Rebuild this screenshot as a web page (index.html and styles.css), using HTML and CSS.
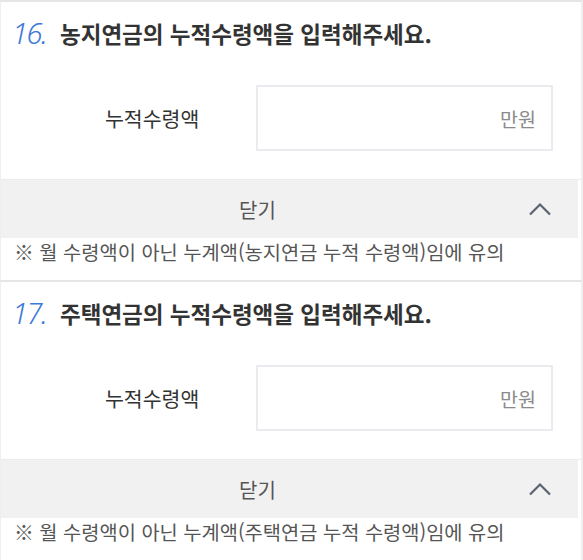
FILE: index.html
```html
<!DOCTYPE html>
<html lang="ko">
<head>
<meta charset="utf-8">
<link rel="stylesheet" href="styles.css">
</head>
<body>
<div class="page">
  <section class="q">
    <div class="q-title">
      <span class="q-num">16.</span>
      <span class="q-text">농지연금의 누적수령액을 입력해주세요.</span>
    </div>
    <div class="q-row">
      <span class="q-label">누적수령액</span>
      <div class="q-input"><span class="q-unit">만원</span></div>
    </div>
    <div class="q-close">
      <span class="q-close-label">닫기</span>
      <span class="q-chevron">
        <svg width="24" height="14" viewBox="0 0 24 14"><path d="M2 12.5 L12 2.5 L22 12.5" fill="none" stroke="#5b6371" stroke-width="2.2"/></svg>
      </span>
    </div>
    <p class="q-note">※ 월 수령액이 아닌 누계액(농지연금 누적 수령액)임에 유의</p>
  </section>
  <section class="q">
    <div class="q-title">
      <span class="q-num">17.</span>
      <span class="q-text">주택연금의 누적수령액을 입력해주세요.</span>
    </div>
    <div class="q-row">
      <span class="q-label">누적수령액</span>
      <div class="q-input"><span class="q-unit">만원</span></div>
    </div>
    <div class="q-close">
      <span class="q-close-label">닫기</span>
      <span class="q-chevron">
        <svg width="24" height="14" viewBox="0 0 24 14"><path d="M2 12.5 L12 2.5 L22 12.5" fill="none" stroke="#5b6371" stroke-width="2.2"/></svg>
      </span>
    </div>
    <p class="q-note">※ 월 수령액이 아닌 누계액(주택연금 누적 수령액)임에 유의</p>
  </section>
</div>
</body>
</html>
```
FILE: styles.css
```css
html, body {
  margin: 0;
  padding: 0;
  background: #fff;
}
body {
  font-family: "Noto Sans CJK KR", "Noto Sans", sans-serif;
  color: #333;
}
.page {
  width: 583px;
}
.q {
  border-top: 2px solid #e6e6e6;
  border-left: 1px solid #efefef;
  border-right: 2px solid #efefef;
}
.q-title {
  height: 61px;
  display: flex;
  align-items: center;
  padding-left: 11px;
  box-sizing: border-box;
}
.q-num {
  font-family: "Noto Sans", "Open Sans", sans-serif;
  font-style: italic;
  font-weight: 300;
  font-size: 29px;
  color: #3c78d8;
  width: 48px;
  letter-spacing: -1.5px;
}
.q-text {
  font-size: 22.5px;
  font-weight: 700;
  color: #333;
  letter-spacing: 0;
}
.q-row {
  display: flex;
  align-items: center;
  padding: 22px 0 28px 0;
  border-bottom: 1px solid #ececec;
}
.q-label {
  margin-left: 104px;
  width: 96px;
  font-size: 20.5px;
  color: #333;
  white-space: nowrap;
}
.q-input {
  margin-left: 55px;
  width: 297px;
  height: 66px;
  box-sizing: border-box;
  border: 2px solid #ebebef;
  display: flex;
  align-items: center;
  justify-content: flex-end;
  padding-right: 15px;
}
.q-unit {
  font-size: 19.5px;
  color: #8a8a8a;
}
.q-close {
  height: 58px;
  background: #f1f1f1;
  display: flex;
  align-items: center;
  margin-right: 3px;
}
.q-close-label {
  flex: 1;
  text-align: center;
  font-size: 20px;
  color: #555;
}
.q-chevron {
  width: 64px;
  display: flex;
  justify-content: flex-start;
  padding-left: 14px;
  box-sizing: border-box;
}
.q-chevron svg {
  display: block;
}
.q-note {
  margin: 0;
  height: 42px;
  padding-left: 13px;
  font-size: 19.8px;
  line-height: 28px;
  color: #555;
  letter-spacing: 0;
  white-space: nowrap;
}
```
